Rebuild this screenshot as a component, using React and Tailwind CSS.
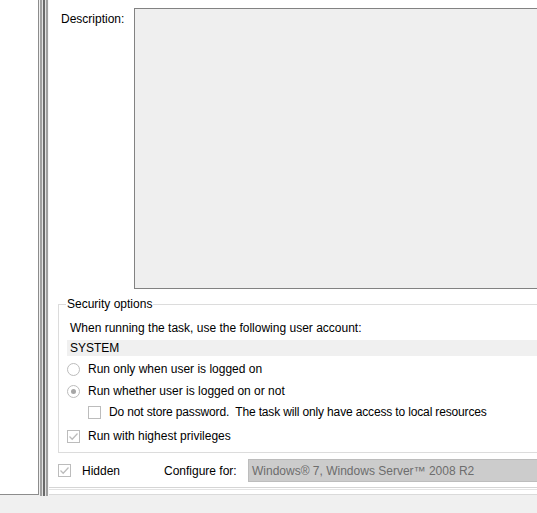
import React from 'react';

const font = { fontFamily: '"Liberation Sans", Arial, sans-serif' };

const Radio = ({ checked }) => (
    <span className="w-[13px] h-[13px] rounded-full border border-[#bcbcbc] bg-white flex items-center justify-center shrink-0">
        {checked && <span className="w-[5px] h-[5px] rounded-full bg-[#a6a6a6]" />}
    </span>
);

const Check = ({ checked }) => (
    <span className="w-[13px] h-[13px] border border-[#bcbcbc] bg-white flex items-center justify-center shrink-0">
        {checked && (
            <svg width="11" height="11" viewBox="0 0 11 11">
                <path d="M1.5 5.5 L4.2 8.2 L9.5 2.5" fill="none" stroke="#bcbcbc" strokeWidth="1.3" />
            </svg>
        )}
    </span>
);

const Divider = () => (
    <div className="flex h-[496px] shrink-0">
        <div className="w-px bg-[#f0f0f0]" />
        <div className="w-[2px] bg-[#a0a0a0]" />
        <div className="w-px bg-[#e3e3e3]" />
        <div className="w-[2px] bg-[#696969]" />
        <div className="w-px bg-[#e3e3e3]" />
        <div className="w-[2px] bg-[#a0a0a0]" />
        <div className="w-px bg-[#f7f7f7]" />
    </div>
);

const SecurityOptions = () => (
    <div className="relative ml-[9px] mt-[15px] w-[520px] h-[149px] border border-[#dcdcdc] flex flex-col">
        <span className="absolute -top-[9px] left-[7px] bg-white px-[1px] leading-[16px]">Security options</span>
        <div className="pl-[11px] pt-[15px] leading-[16px]">When running the task, use the following user account:</div>
        <div className="ml-[8px] mt-[4px] h-[16px] bg-[#f0f0f0] pl-[3px] leading-[16px]">SYSTEM</div>
        <div className="ml-[8px] mt-[5px] h-[16px] flex items-center gap-[8px]">
            <Radio />
            <span>Run only when user is logged on</span>
        </div>
        <div className="ml-[8px] mt-[6px] h-[16px] flex items-center gap-[8px]">
            <Radio checked />
            <span>Run whether user is logged on or not</span>
        </div>
        <div className="ml-[29px] mt-[5px] h-[16px] flex items-center gap-[8px]">
            <Check />
            <span className="whitespace-pre tracking-[-0.15px]">Do not store password.  The task will only have access to local resources</span>
        </div>
        <div className="ml-[8px] mt-[8px] h-[16px] flex items-center gap-[8px]">
            <Check checked />
            <span>Run with highest privileges</span>
        </div>
    </div>
);

const App = () => {
    return (
        <div className="w-[537px] h-[513px] bg-[#f0f0f0] overflow-hidden flex items-start text-[12px] text-black" style={font}>
            <div className="w-[39px] h-[495px] bg-white border-r border-b border-[#8c8c8c] shrink-0" />
            <Divider />
            <div className="flex-1 min-w-0 flex flex-col overflow-hidden">
                <div className="h-[487px] bg-white flex flex-col">
                    <div className="flex pt-[8px]">
                        <div className="w-[85px] pl-[12px] pt-[3px] leading-[16px] shrink-0">Description:</div>
                        <div className="w-[420px] h-[281px] bg-[#efefef] border border-[#828282] shrink-0" />
                    </div>
                    <SecurityOptions />
                    <div className="flex items-center mt-[6px] h-[23px] ml-[9px]">
                        <Check checked />
                        <span className="ml-[11px] w-[82px] shrink-0">Hidden</span>
                        <span className="w-[84px] shrink-0">Configure for:</span>
                        <div className="w-[300px] h-[23px] bg-[#cccccc] border border-[#bdbdbd] pl-[3px] flex items-center text-[#6d6d6d] shrink-0">
                            Windows® 7, Windows Server™ 2008 R2
                        </div>
                    </div>
                </div>
                <div className="h-px bg-[#d5d5d5]" />
                <div className="h-px bg-white" />
                <div className="h-px bg-[#e3e3e3]" />
                <div className="h-[4px] bg-white" />
                <div className="h-px bg-[#dadada]" />
            </div>
        </div>
    );
};

export default App;
